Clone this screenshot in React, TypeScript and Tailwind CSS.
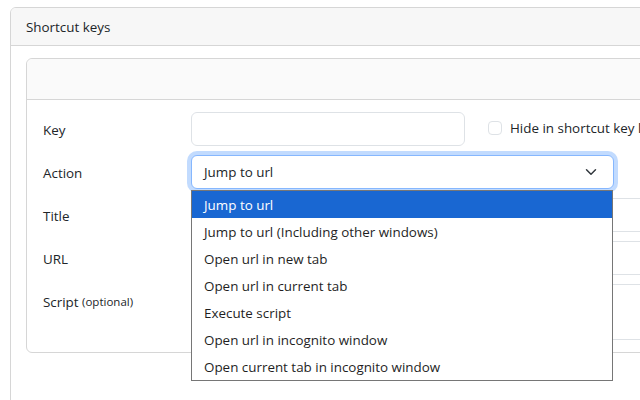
import React from "react";

const options = [
  "Jump to url",
  "Jump to url (Including other windows)",
  "Open url in new tab",
  "Open url in current tab",
  "Execute script",
  "Open url in incognito window",
  "Open current tab in incognito window",
];

function Label({ children }: { children: React.ReactNode }) {
  return (
    <div className="w-[148px] shrink-0 h-[34px] pt-[2px] flex items-center text-[13.4px] text-[#212529]">
      {children}
    </div>
  );
}

export default function App() {
  return (
    <div
      className="w-[640px] h-[400px] overflow-hidden bg-white text-[#212529]"
      style={{ fontFamily: '"Open Sans", "Noto Sans", sans-serif' }}
    >
      <div className="pl-[10px] pt-[7px]">
        <div className="w-[720px] h-[420px] border border-[#d6d6d6] rounded-[6px] overflow-hidden">
          <div className="h-[38px] pt-[1px] bg-[#f7f7f7] border-b border-[#d6d6d6] px-[15px] flex items-center text-[13.4px]">
            Shortcut keys
          </div>
          <div className="pt-[12px] pl-[15px]">
            <div className="w-[700px] border border-[#d6d6d6] rounded-[6px]">
              <div className="h-[41px] bg-[#fafafa] border-b border-[#d6d6d6] rounded-t-[6px]" />
              <div className="pt-[12px] pb-[12px] pl-[16px] flex flex-col gap-[9px] text-[13.4px]">
                <div className="flex items-center">
                  <Label>Key</Label>
                  <div className="w-[274px] h-[34px] border border-[#dee2e6] rounded-[6px] bg-white" />
                  <div className="ml-[23px] flex items-center gap-[8px] mt-[-2px]">
                    <div className="w-[14px] h-[14px] border border-[#dee2e6] rounded-[4px] bg-white" />
                    <span className="whitespace-nowrap pt-[1px]">Hide in shortcut key list</span>
                  </div>
                </div>
                <div className="flex items-center relative z-10">
                  <Label>Action</Label>
                  <div className="relative w-[423px]">
                    <div className="h-[34px] border border-[#86b7fe] rounded-[6px] bg-white shadow-[0_0_0_4px_rgba(13,110,253,0.25)] flex items-center pl-[12px] pr-[14px]">
                      <span className="flex-1 pt-[1px]">Jump to url</span>
                      <svg width="16" height="12" viewBox="0 0 16 16" fill="none">
                        <path d="m2 5 6 6 6-6" stroke="#343a40" strokeWidth="2" strokeLinecap="round" strokeLinejoin="round" />
                      </svg>
                    </div>
                    <div className="absolute left-0 top-[35px] w-[422px] bg-white border border-[#767676]">
                      {options.map((o, i) => (
                        <div
                          key={o}
                          className={
                            i === 0
                              ? "h-[27px] pt-[1px] flex items-center pl-[12px] bg-[#1967d2] text-white"
                              : "h-[27px] pt-[1px] flex items-center pl-[12px] text-[#1f1f1f]"
                          }
                        >
                          {o}
                        </div>
                      ))}
                    </div>
                  </div>
                </div>
                <div className="flex items-center">
                  <Label>Title</Label>
                  <div className="w-[480px] h-[34px] border border-[#dee2e6] rounded-[6px] bg-white" />
                </div>
                <div className="flex items-center">
                  <Label>URL</Label>
                  <div className="w-[480px] h-[34px] border border-[#dee2e6] rounded-[6px] bg-white" />
                </div>
                <div className="flex items-start">
                  <div className="w-[148px] shrink-0 h-[34px] pt-[2px] flex items-center text-[13.4px] whitespace-nowrap">
                    Script&nbsp;<span className="text-[11.5px]">(optional)</span>
                  </div>
                  <div className="w-[480px] h-[56px] border border-[#dee2e6] rounded-[6px] bg-white" />
                </div>
              </div>
            </div>
          </div>
        </div>
      </div>
    </div>
  );
}
